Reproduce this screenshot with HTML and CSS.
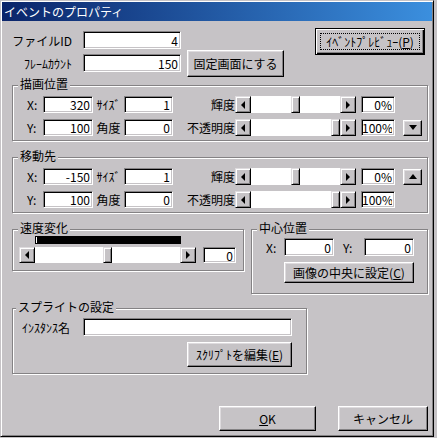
FILE: index.html
```html
<!DOCTYPE html>
<html lang="ja">
<head>
    <meta charset="UTF-8" />
    <title>イベントのプロパティ</title>
    <link rel="stylesheet" href="styles.css">
</head>
<body>
<div class="window">
    <div class="titlebar">イベントのプロパティ</div>

    <div class="client">
        <!-- File ID / frame count -->
        <div class="top">
            <div class="fields">
                <div class="field-row">
                    <label class="top-label">ファイルID</label>
                    <input class="edit edit-top" value="4">
                </div>
                <div class="field-row">
                    <label class="top-label">ﾌﾚｰﾑｶｳﾝﾄ</label>
                    <input class="edit edit-top" value="150">
                </div>
            </div>
            <button class="btn btn-fix">固定画面にする</button>
            <button class="btn btn-default btn-preview"><span class="focus">ｲﾍﾞﾝﾄﾌﾟﾚﾋﾞｭｰ(<u>P</u>)</span></button>
        </div>

        <!-- 描画位置 -->
        <div class="group">
            <div class="group-title">描画位置</div>
            <div class="rows">
                <div class="prop-row">
                    <span class="lbl-xy">X:</span><input class="edit edit-pos" value="320">
                    <span class="lbl-mid">ｻｲｽﾞ</span><input class="edit edit-size" value="1">
                    <span class="lbl-slider">輝度</span>
                    <div class="hscroll hscroll-prop">
                        <span class="sb-btn sb-left"></span>
                        <span class="sb-track"><span class="sb-thumb" style="margin-left: 40px"></span></span>
                        <span class="sb-btn sb-right"></span>
                    </div>
                    <input class="edit edit-pct" value="0%">
                </div>
                <div class="prop-row">
                    <span class="lbl-xy">Y:</span><input class="edit edit-pos" value="100">
                    <span class="lbl-mid">角度</span><input class="edit edit-size" value="0">
                    <span class="lbl-slider">不透明度</span>
                    <div class="hscroll hscroll-prop">
                        <span class="sb-btn sb-left"></span>
                        <span class="sb-track"><span class="sb-thumb" style="margin-left: 80px"></span></span>
                        <span class="sb-btn sb-right"></span>
                    </div>
                    <input class="edit edit-pct" value="100%">
                    <button class="btn spin-btn"><span class="tri-down"></span></button>
                </div>
            </div>
        </div>

        <!-- 移動先 -->
        <div class="group group-next">
            <div class="group-title">移動先</div>
            <div class="rows">
                <div class="prop-row">
                    <span class="lbl-xy">X:</span><input class="edit edit-pos" value="-150">
                    <span class="lbl-mid">ｻｲｽﾞ</span><input class="edit edit-size" value="1">
                    <span class="lbl-slider">輝度</span>
                    <div class="hscroll hscroll-prop">
                        <span class="sb-btn sb-left"></span>
                        <span class="sb-track"><span class="sb-thumb" style="margin-left: 40px"></span></span>
                        <span class="sb-btn sb-right"></span>
                    </div>
                    <input class="edit edit-pct" value="0%">
                    <button class="btn spin-btn"><span class="tri-up"></span></button>
                </div>
                <div class="prop-row">
                    <span class="lbl-xy">Y:</span><input class="edit edit-pos" value="100">
                    <span class="lbl-mid">角度</span><input class="edit edit-size" value="0">
                    <span class="lbl-slider">不透明度</span>
                    <div class="hscroll hscroll-prop">
                        <span class="sb-btn sb-left"></span>
                        <span class="sb-track"><span class="sb-thumb" style="margin-left: 80px"></span></span>
                        <span class="sb-btn sb-right"></span>
                    </div>
                    <input class="edit edit-pct" value="100%">
                </div>
            </div>
        </div>

        <!-- 速度変化 / 中心位置 -->
        <div class="split">
            <div class="group group-speed">
                <div class="group-title">速度変化</div>
                <div class="curve"><span class="curve-mark"></span></div>
                <div class="speed-row">
                    <div class="hscroll hscroll-speed">
                        <span class="sb-btn sb-left"></span>
                        <span class="sb-track"><span class="sb-thumb" style="margin-left: 68px"></span></span>
                        <span class="sb-btn sb-right"></span>
                    </div>
                    <input class="edit edit-speed" value="0">
                </div>
            </div>

            <div class="group group-center">
                <div class="group-title">中心位置</div>
                <div class="center-row">
                    <span class="lbl-cx">X:</span><input class="edit edit-center" value="0">
                    <span class="lbl-cy">Y:</span><input class="edit edit-center" value="0">
                </div>
                <button class="btn btn-center">画像の中央に設定(<u>C</u>)</button>
            </div>
        </div>

        <!-- スプライトの設定 -->
        <div class="group group-sprite">
            <div class="group-title">スプライトの設定</div>
            <div class="inst-row">
                <label class="lbl-inst">ｲﾝｽﾀﾝｽ名</label>
                <input class="edit edit-inst" value="">
            </div>
            <button class="btn btn-script">ｽｸﾘﾌﾟﾄを編集(<u>E</u>)</button>
        </div>

        <div class="footer">
            <button class="btn btn-ok"><u>O</u>K</button>
            <button class="btn btn-cancel">キャンセル</button>
        </div>
    </div>
</div>
</body>
</html>
```

FILE: styles.css
```css
/* classic dialog colours */
html, body {
    margin: 0;
    padding: 0;
    background-color: #c6c3c6;
}
body {
    font-family: "Noto Sans CJK JP", "Noto Sans", sans-serif;
    font-size: 12px;
    color: #000;
}

.window {
    width: 434px;
    height: 437px;
    box-sizing: border-box;
    border: 1px solid;
    border-color: #c6c3c6 #000 #000 #c6c3c6;
    box-shadow: inset 1px 1px #fff, inset -1px -1px #848284;
    padding: 1px;
    display: flex;
    flex-direction: column;
}
.titlebar {
    height: 19px;
    line-height: 19px;
    padding-left: 2px;
    color: #fff;
    background: linear-gradient(to right, #0a246a, #3b8fde);
    white-space: nowrap;
}
.client {
    flex: 1;
    display: flex;
    flex-direction: column;
    padding: 0 4px 0 10px;
}

/* 3D controls */
.edit {
    box-sizing: border-box;
    flex: none;
    height: 17px;
    padding: 0 2px 0 0;
    margin: 0;
    font: inherit;
    color: #000;
    text-align: right;
    background: #fff;
    border: 1px solid;
    border-color: #848284 #fff #fff #848284;
    box-shadow: inset 1px 1px #000, inset -1px -1px #c6c3c6;
    border-radius: 0;
    outline: none;
}
.btn {
    box-sizing: border-box;
    flex: none;
    padding: 0;
    margin: 0;
    font: inherit;
    color: #000;
    background: #c6c3c6;
    border: 1px solid;
    border-color: #fff #000 #000 #fff;
    box-shadow: inset -1px -1px #848284, inset 1px 1px #dedbde;
    border-radius: 0;
    display: flex;
    align-items: center;
    justify-content: center;
    white-space: nowrap;
}
.btn u {
    text-decoration: underline;
    text-underline-offset: 1px;
}
.btn-default {
    border-color: #000;
    box-shadow: inset 1px 1px #fff, inset -1px -1px #000, inset -2px -2px #848284;
    padding: 4px;
}
.focus {
    flex: 1;
    align-self: stretch;
    display: flex;
    align-items: center;
    justify-content: center;
    border: 1px dotted #000;
}

/* top area */
.top {
    display: flex;
    align-items: flex-start;
    padding-top: 7px;
}
.fields {
    display: flex;
    flex-direction: column;
    gap: 5px;
    margin-top: 3px;
}
.field-row {
    display: flex;
    align-items: center;
}
.top-label {
    width: 60px;
    margin-right: 11px;
    text-align: right;
    white-space: nowrap;
}
.edit-top {
    width: 98px;
    height: 18px;
}
.btn-fix {
    width: 97px;
    height: 27px;
    margin: 22px 0 0 6px;
}
.btn-preview {
    width: 110px;
    height: 27px;
    margin-left: auto;
    margin-right: 3px;
}

/* group boxes */
.group {
    display: flex;
    flex-direction: column;
    margin-top: 8px;
    border: 1px solid #848284;
    box-shadow: inset 1px 1px #fff, 1px 1px #fff;
}
.group-title {
    align-self: flex-start;
    height: 14px;
    line-height: 14px;
    margin: -9px 0 0 5px;
    padding: 0 2px;
    background: #c6c3c6;
    white-space: nowrap;
}
.group-next {
    margin-top: 16px;
}
.rows {
    display: flex;
    flex-direction: column;
    gap: 6px;
    margin-top: 5px;
    padding-bottom: 4px;
}
.prop-row {
    display: flex;
    align-items: center;
    height: 17px;
    padding-left: 14px;
}
.lbl-xy {
    width: 16px;
}
.edit-pos {
    width: 50px;
}
.lbl-mid {
    width: 31px;
    text-align: center;
}
.edit-size {
    width: 49px;
}
.lbl-slider {
    width: 62px;
    text-align: right;
}
.edit-pct {
    width: 34px;
    margin-left: 5px;
}
.spin-btn {
    width: 19px;
    height: 16px;
    margin-left: 8px;
}
.tri-down {
    border-left: 4px solid transparent;
    border-right: 4px solid transparent;
    border-top: 5px solid #000;
}
.tri-up {
    border-left: 4px solid transparent;
    border-right: 4px solid transparent;
    border-bottom: 5px solid #000;
}

/* scroll bars */
.hscroll {
    display: flex;
    flex: none;
    height: 17px;
}
.hscroll-prop {
    width: 121px;
}
.hscroll-speed {
    width: 177px;
    height: 16px;
}
.sb-btn {
    box-sizing: border-box;
    width: 16px;
    flex: none;
    background: #c6c3c6;
    border: 1px solid;
    border-color: #dedbde #000 #000 #dedbde;
    box-shadow: inset 1px 1px #fff, inset -1px -1px #848284;
    display: flex;
    align-items: center;
    justify-content: center;
}
.sb-left::before {
    content: "";
    border-top: 4px solid transparent;
    border-bottom: 4px solid transparent;
    border-right: 4px solid #000;
}
.sb-right::before {
    content: "";
    border-top: 4px solid transparent;
    border-bottom: 4px solid transparent;
    border-left: 4px solid #000;
}
.sb-track {
    flex: 1;
    display: flex;
    background: #fff;
}
.sb-thumb {
    box-sizing: border-box;
    width: 9px;
    background: #c6c3c6;
    border: 1px solid;
    border-color: #dedbde #000 #000 #dedbde;
    box-shadow: inset 1px 1px #fff, inset -1px -1px #848284;
}

/* speed + centre */
.split {
    display: flex;
    align-items: flex-start;
    gap: 7px;
    margin-top: 16px;
}
.split .group {
    margin-top: 0;
}
.group-speed {
    width: 232px;
    box-sizing: border-box;
}
.curve {
    display: flex;
    width: 146px;
    height: 8px;
    margin: 1px 0 0 22px;
    background: #000;
}
.curve-mark {
    width: 1px;
    height: 6px;
    margin: 1px 0 0 1px;
    background: #fff;
}
.speed-row {
    display: flex;
    gap: 7px;
    margin: 3px 0 0 6px;
    padding-bottom: 7px;
}
.edit-speed {
    width: 33px;
    height: 16px;
}
.group-center {
    width: 177px;
    box-sizing: border-box;
}
.center-row {
    display: flex;
    align-items: center;
    margin: 3px 0 0 14px;
}
.lbl-cx {
    width: 18px;
}
.lbl-cy {
    box-sizing: border-box;
    width: 30px;
    padding-left: 9px;
}
.edit-center {
    width: 50px;
    height: 18px;
}
.btn-center {
    align-self: flex-start;
    width: 130px;
    height: 21px;
    margin: 6px 0 10px 32px;
}

/* sprite */
.group-sprite {
    width: 295px;
    box-sizing: border-box;
    margin-top: 14px;
}
.group-sprite .group-title {
    margin-left: 3px;
}
.inst-row {
    display: flex;
    align-items: center;
    margin: 4px 0 0 9px;
}
.lbl-inst {
    width: 61px;
    white-space: nowrap;
}
.edit-inst {
    width: 209px;
    height: 18px;
}
.btn-script {
    align-self: flex-start;
    width: 105px;
    height: 25px;
    margin: 6px 0 6px 174px;
}

/* OK / cancel */
.footer {
    display: flex;
    justify-content: flex-end;
    gap: 22px;
    margin-top: 32px;
}
.btn-ok {
    width: 97px;
    height: 25px;
}
.btn-cancel {
    width: 90px;
    height: 25px;
}
```
